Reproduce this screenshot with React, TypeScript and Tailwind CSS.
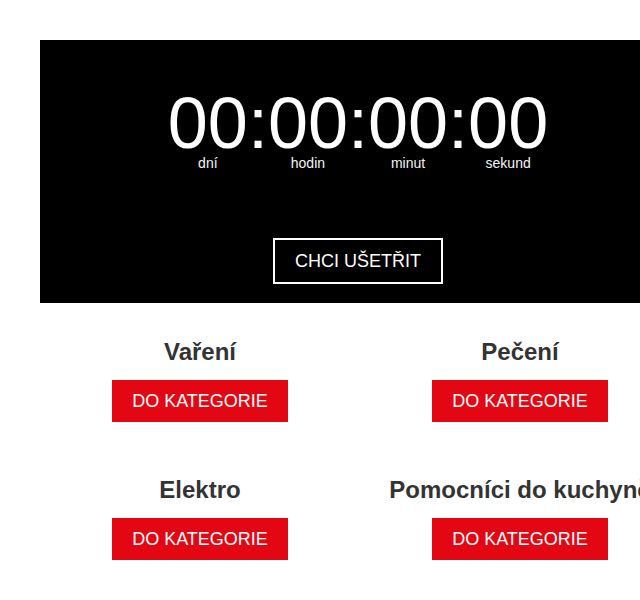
import React from 'react'

type Unit = {
  value: string
  label: string
}

const units: Unit[] = [
  { value: '00', label: 'dní' },
  { value: '00', label: 'hodin' },
  { value: '00', label: 'minut' },
  { value: '00', label: 'sekund' },
]

const categories = ['Vaření', 'Pečení', 'Elektro', 'Pomocníci do kuchyně']

// countdown banner with the CTA button
function Countdown() {
  return (
    <div className="bg-black text-white flex flex-col items-center pt-[51px] pb-[19px] pr-[4px]">
      <div className="flex flex-row items-start">
        {units.map((unit, i) => (
          <React.Fragment key={unit.label}>
            {i > 0 && <span className="text-[72px] leading-[64px]">:</span>}
            <div className="flex flex-col items-center">
              <span className="text-[72px] leading-[64px]">{unit.value}</span>
              <span className="text-[14px] leading-[16px] text-gray-100">{unit.label}</span>
            </div>
          </React.Fragment>
        ))}
      </div>
      <button className="mt-[67px] border-2 border-white px-5 py-[10px] text-[18px] leading-[22px] text-white">
        CHCI UŠETŘIT
      </button>
    </div>
  )
}

function CategoryCard({ name }: { name: string }) {
  return (
    <div className="flex flex-col items-center">
      <h2 className="text-[24px] leading-[28px] font-bold text-[#333] whitespace-nowrap">{name}</h2>
      <a href="#" className="mt-[14px] bg-[#e30613] text-white px-5 py-[10px] text-[18px] leading-[22px]">
        DO KATEGORIE
      </a>
    </div>
  )
}

export default function App() {
  return (
    <div className="w-full min-h-[600px] overflow-hidden bg-white font-['Liberation_Sans',Arial,sans-serif]">
      <div className="w-[640px] ml-[40px] mt-[40px]">
        <Countdown />
        <div className="grid grid-cols-2 pt-[35px] gap-y-[54px]">
          {categories.map((c) => (
            <CategoryCard key={c} name={c} />
          ))}
        </div>
      </div>
    </div>
  )
}
